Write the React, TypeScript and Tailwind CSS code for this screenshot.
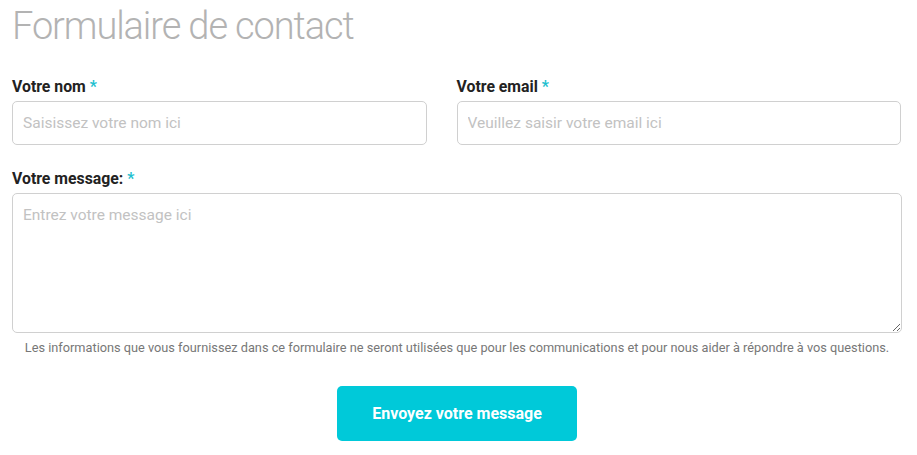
import React from "react";

export default function App() {
  return (
    <div className="w-[917px] h-[455px] bg-white overflow-hidden" style={{ fontFamily: "Roboto, 'Liberation Sans', sans-serif" }}>
      <div className="pl-[12px] pr-[16px]">
        <h1 className="text-[38px] leading-[50px] font-light text-[#b3b3b3] tracking-[-1.1px] mt-[1px]">Formulaire de contact</h1>
        <div className="flex gap-[30px] mt-[27px]">
          <div className="w-[415px] flex flex-col">
            <label className="text-[15.8px] font-bold text-[#222] leading-[18px]">
              Votre nom <span className="text-[#1fbfcf]">*</span>
            </label>
            <input
              className="mt-[5px] h-[44px] border border-[#d0d0d0] rounded-[5px] px-[10px] text-[15.5px] placeholder:text-[#c2c2c2] outline-none"
              placeholder="Saisissez votre nom ici"
            />
          </div>
          <div className="w-[445px] flex flex-col">
            <label className="text-[15.8px] font-bold text-[#222] leading-[18px]">
              Votre email <span className="text-[#1fbfcf]">*</span>
            </label>
            <input
              className="mt-[5px] h-[44px] border border-[#d0d0d0] rounded-[5px] px-[10px] text-[15.5px] placeholder:text-[#c2c2c2] outline-none"
              placeholder="Veuillez saisir votre email ici"
            />
          </div>
        </div>
        <div className="mt-[25px] flex flex-col">
          <label className="text-[15.8px] font-bold text-[#222] leading-[18px]">
            Votre message: <span className="text-[#1fbfcf]">*</span>
          </label>
          <textarea
            className="mt-[5px] w-[890px] h-[140px] border border-[#d0d0d0] rounded-[5px] px-[10px] py-[10px] text-[15.5px] placeholder:text-[#c2c2c2] outline-none"
            placeholder="Entrez votre message ici"
          />
          <p className="mt-[7px] text-[12.75px] text-[#777] text-center w-[890px] leading-[16px]">
            Les informations que vous fournissez dans ce formulaire ne seront utilisées que pour les communications et pour nous aider à répondre à vos questions.
          </p>
        </div>
        <div className="flex justify-center w-[890px] mt-[30px]">
          <button className="w-[240px] h-[55px] bg-[#00c9d9] rounded-[5px] text-white font-bold text-[16px]">
            Envoyez votre message
          </button>
        </div>
      </div>
    </div>
  );
}
